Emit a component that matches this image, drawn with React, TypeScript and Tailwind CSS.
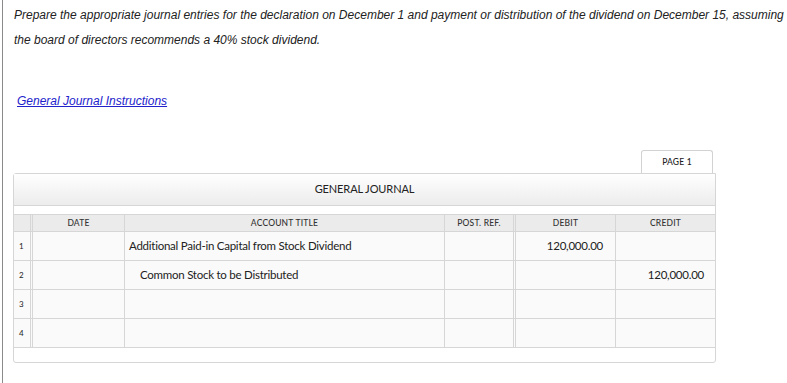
import React from 'react';

// journal rows: account title, indent (credit lines are indented), debit, credit
const ROWS: { title: string; indent: boolean; debit: string; credit: string }[] = [
  { title: 'Additional Paid-in Capital from Stock Dividend', indent: false, debit: '120,000.00', credit: '' },
  { title: 'Common Stock to be Distributed', indent: true, debit: '', credit: '120,000.00' },
  { title: '', indent: false, debit: '', credit: '' },
  { title: '', indent: false, debit: '', credit: '' },
];

const cell = 'border-r border-[#d6d6d6] h-full';
const dbl = 'border-r-[3px] border-double border-[#d6d6d6] h-full';

export default function App() {
  return (
    <div className="w-[787px] min-h-[383px] bg-white overflow-hidden">
      <div className="ml-[2px] border-l border-[#8a8a8a] min-h-[383px] pl-[10px] pt-[3px]">
        {/* prompt */}
        <p className="pl-px italic text-[12px] leading-[25px] text-[#222] font-['Liberation_Sans',Arial,sans-serif] whitespace-nowrap">
          Prepare the appropriate journal entries for the declaration on December 1 and payment or distribution of the dividend on December 15, assuming
          <br />
          the board of directors recommends a 40% stock dividend.
        </p>

        <div className="mt-[39px] pl-[4px] h-[14px] leading-[14px]">
          <a href="#" className="italic text-[12px] underline text-[#2222cc] font-['Liberation_Sans',Arial,sans-serif]">
            General Journal Instructions
          </a>
        </div>

        {/* journal card */}
        <div className="mt-[44px] w-[703px] font-['Lato',sans-serif]">
          <div className="flex justify-end pr-[3px]">
            <div className="w-[72px] h-[23px] border border-b-0 border-[#d2d2d2] rounded-t-[3px] bg-white flex items-center justify-center text-[8.5px] text-[#222] font-medium tracking-[0.2px]">
              PAGE 1
            </div>
          </div>
          <div className="border border-[#d6d6d6] rounded-[3px] rounded-tr-none bg-white pb-[14px]">
            <div className="h-[32px] border-b border-[#d6d6d6] bg-gradient-to-b from-white to-[#ececec] flex items-center justify-center text-[11px] text-[#222] tracking-[-0.1px]">
              GENERAL JOURNAL
            </div>
            <div className="mt-[8px] border-t border-[#d6d6d6]">
              <div className="flex h-[17px] bg-[#ebebeb] border-b border-[#d6d6d6] text-[8.5px] font-medium text-[#333] items-center tracking-[0.2px]">
                <div className={`w-[19px] ${dbl}`} />
                <div className={`w-[92px] ${cell} flex items-center justify-center`}>DATE</div>
                <div className={`w-[320px] ${cell} flex items-center justify-center`}>ACCOUNT TITLE</div>
                <div className={`w-[71px] ${dbl} flex items-center justify-center`}>POST. REF.</div>
                <div className={`w-[100px] ${cell} flex items-center justify-center`}>DEBIT</div>
                <div className="w-[99px] h-full flex items-center justify-center">CREDIT</div>
              </div>
              {ROWS.map((row, i) => (
                <div key={i} className="flex h-[29px] bg-[#fafafa] border-b border-[#d6d6d6] text-[11.5px] text-[#222] tracking-[-0.25px]">
                  <div className={`w-[19px] ${dbl} flex items-center pl-[5px] text-[8px] tracking-normal`}>{i + 1}</div>
                  <div className={`w-[92px] ${cell}`} />
                  <div className={`w-[320px] ${cell} flex items-center ${row.indent ? 'pl-[15px]' : 'pl-[4px]'}`}>{row.title}</div>
                  <div className={`w-[71px] ${dbl}`} />
                  <div className={`w-[100px] ${cell} flex items-center justify-end pr-[12px]`}>{row.debit}</div>
                  <div className="w-[99px] h-full flex items-center justify-end pr-[11px]">{row.credit}</div>
                </div>
              ))}
            </div>
          </div>
        </div>
      </div>
    </div>
  );
}
